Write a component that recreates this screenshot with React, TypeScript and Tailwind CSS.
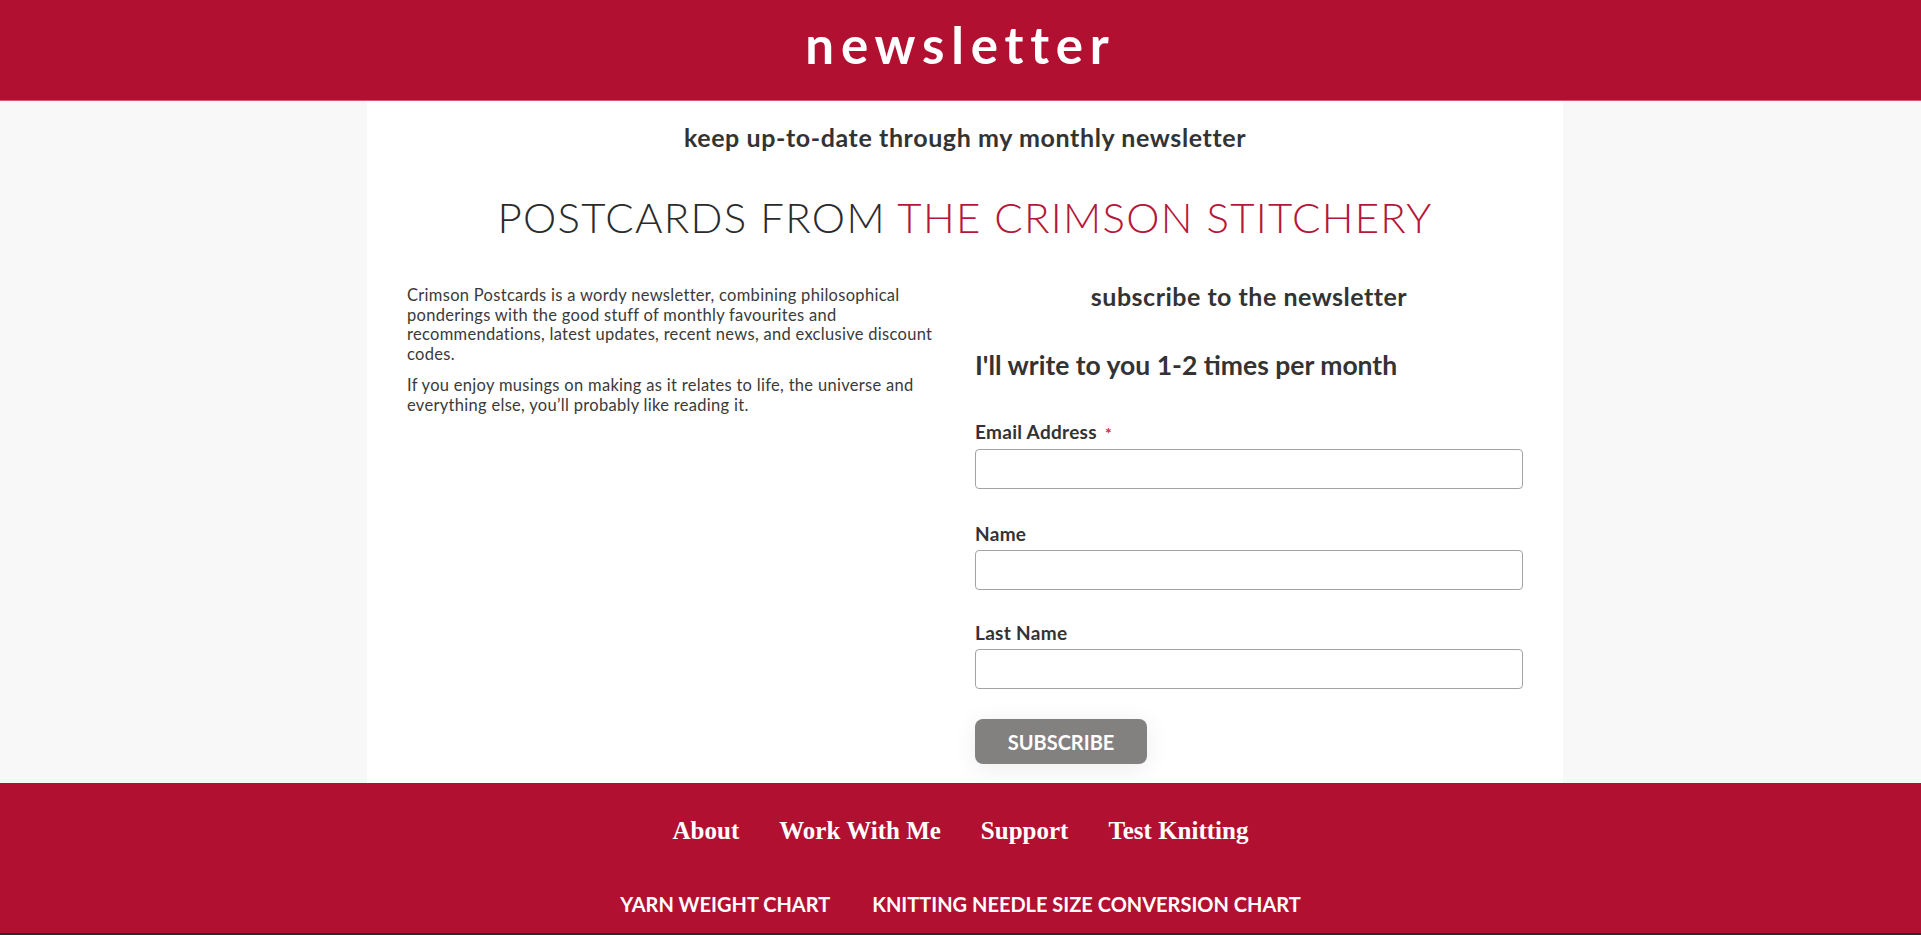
import React from "react";

const lato = { fontFamily: "Lato, 'Noto Sans', sans-serif" };

function Field({ label, required }: { label: string; required?: boolean }) {
  return (
    <div className="flex flex-col">
      <label className="text-[19px] leading-[24px] font-bold text-[#333333] tracking-[0.3px]">
        {label}
        {required && <span className="text-[#e0223f] ml-[8px] text-[16px]">*</span>}
      </label>
      <input
        type="text"
        className="mt-[4px] h-[40px] w-full rounded-[4px] border border-[#a3a3a3] bg-white outline-none"
      />
    </div>
  );
}

export default function App() {
  return (
    <div className="min-h-[935px] w-full bg-[#f8f8f8] flex flex-col" style={lato}>
      <header className="h-[101px] bg-[#b11031] border-b border-[#cf5a72] flex items-center justify-center pb-[12px]">
        <h1 className="text-white text-[51px] font-bold tracking-[6.8px] leading-none">newsletter</h1>
      </header>

      <main className="w-[1196px] ml-[367px] bg-white h-[682px] px-[40px] pt-[20px] flex flex-col">
        <p className="text-center text-[25px] leading-[32px] font-bold text-[#333333] tracking-[0.6px]">
          keep up-to-date through my monthly newsletter
        </p>
        <h2 className="mt-[39px] text-center text-[42px] leading-[50px] font-light tracking-[1.3px] text-[#2b2b2b]">
          POSTCARDS FROM <span className="text-[#b5173a]">THE CRIMSON STITCHERY</span>
        </h2>

        <div className="mt-[37px] grid grid-cols-2 gap-[20px]">
          <div className="pt-[7px] text-[16.5px] leading-[19.6px] text-[#3a3a3a] pr-[20px] tracking-[0.3px]">
            <p>
              Crimson Postcards is a wordy newsletter, combining philosophical ponderings with the good stuff of monthly favourites and recommendations, latest updates, recent news, and exclusive discount codes.
            </p>
            <p className="mt-[12px]">
              If you enjoy musings on making as it relates to life, the universe and everything else, you’ll probably like reading it.
            </p>
          </div>

          <div className="flex flex-col pt-[2px]">
            <h3 className="text-center text-[25px] leading-[30px] font-bold text-[#333333] tracking-[0.5px]">
              subscribe to the newsletter
            </h3>
            <h4 className="mt-[38px] text-[26.5px] leading-[32px] font-bold text-[#333333]">
              I'll write to you 1-2 times per month
            </h4>
            <div className="mt-[39px]">
              <Field label="Email Address" required />
            </div>
            <div className="mt-[33px]">
              <Field label="Name" />
            </div>
            <div className="mt-[31px]">
              <Field label="Last Name" />
            </div>
            <div className="mt-[30px]">
              <button className="h-[45px] w-[172px] rounded-[8px] bg-[#838080] text-white text-[20px] font-bold shadow-[0_4px_24px_rgba(0,0,0,0.08)]">
                SUBSCRIBE
              </button>
            </div>
          </div>
        </div>
      </main>

      <footer className="h-[152px] bg-[#b11031] border-b-[2px] border-[#2a2a2a] flex flex-col items-center">
        <nav
          className="mt-[33px] flex gap-[40px] text-white text-[25px] font-bold leading-[30px]"
          style={{ fontFamily: "'Liberation Serif', 'DejaVu Serif', serif" }}
        >
          <a>About</a>
          <a>Work With Me</a>
          <a>Support</a>
          <a>Test Knitting</a>
        </nav>
        <nav className="mt-[46px] flex gap-[42px] text-white text-[20px] font-bold leading-[24px]">
          <a>YARN WEIGHT CHART</a>
          <a>KNITTING NEEDLE SIZE CONVERSION CHART</a>
        </nav>
      </footer>
    </div>
  );
}
